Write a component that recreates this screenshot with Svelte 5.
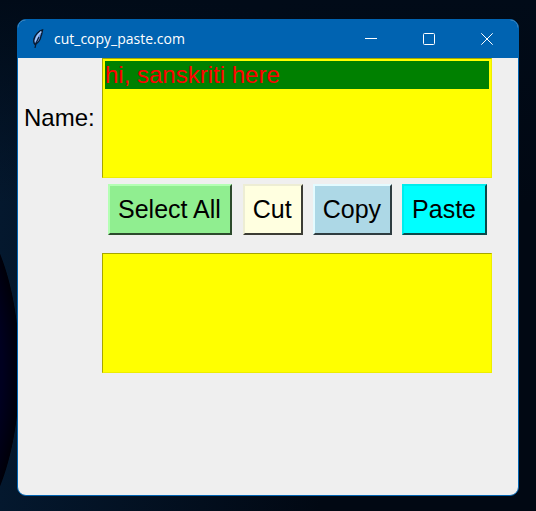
<script>
  let source = $state('hi, sanskriti here');
  let target = $state('');
  let clipboard = $state('');
  let selected = $state(true);

  function copy() {
    clipboard = source;
  }
  function cut() {
    clipboard = source;
    source = '';
    selected = false;
  }
  function paste() {
    target += clipboard;
  }
</script>

<div class="desktop">
  <main class="window">
    <header>
      <svg class="feather" width="16" height="22" viewBox="0 0 16 22" aria-hidden="true">
        <path d="M12.500 2C8.500 3 5 7 4 11c-.6 2.500 0 4.500 1 5.500 3-1.500 5.500-5 6-8.500l.6-1.500Z" fill="#5f8fdc" stroke="#0a1a30" stroke-width="1.400" />
        <path d="M11.300 3.500C8.500 6 6.200 9.500 5.300 13.500" fill="none" stroke="#a9c8f5" stroke-width="1.600" />
        <path d="M9 9C7.500 11.500 5.500 14.500 5 20" fill="none" stroke="#0a1a30" stroke-width="1.200" />
      </svg>
      <h1>cut_copy_paste.com</h1>
      <button class="control" aria-label="Minimize">
        <svg width="12" height="12" viewBox="0 0 12 12"><path d="M0 5.500h12" /></svg>
      </button>
      <button class="control" aria-label="Maximize">
        <svg width="12" height="12" viewBox="0 0 12 12"><rect x=".5" y=".5" width="11" height="11" rx="1" /></svg>
      </button>
      <button class="control" aria-label="Close">
        <svg width="12" height="12" viewBox="0 0 12 12"><path d="M.3.3l11.400 11.400M11.700.3L.3 11.700" /></svg>
      </button>
    </header>
    <div class="form">
      <label for="name">Name:</label>
      <textarea id="name" class:selected bind:value={source} spellcheck="false"></textarea>
      <div class="actions">
        <button class="action select" onclick={() => (selected = true)}>Select All</button>
        <button class="action cut" onclick={cut}>Cut</button>
        <button class="action copy" onclick={copy}>Copy</button>
        <button class="action paste" onclick={paste}>Paste</button>
      </div>
      <textarea class="result" aria-label="Pasted text" bind:value={target} spellcheck="false"></textarea>
    </div>
  </main>
</div>

<style>
  :global(body) {
    margin: 0;
    background: #010813;
  }
  .desktop {
    box-sizing: border-box;
    display: flex;
    min-height: 100vh;
    padding: 19px 17px 15px;
    background:
      radial-gradient(ellipse 72px 170px at -52px 370px, #00002a 0, #000020 75%, #000009 99%, transparent 100%),
      linear-gradient(180deg, #010b18 0, transparent 40%),
      linear-gradient(90deg, #04182e, #010813 60%);
  }
  .window {
    flex: 1;
    display: flex;
    flex-direction: column;
    overflow: hidden;
    border: 1px solid #0063b1;
    border-radius: 9px;
    background: #efefef;
    font-family: "Liberation Sans", Arial, sans-serif;
  }
  header {
    display: flex;
    align-items: center;
    height: 38px;
    padding: 0 2px 0 12px;
    background: #0063b1;
    color: #fff;
  }
  .feather {
    flex: none;
    margin-right: 8px;
  }
  h1 {
    flex: 1;
    margin: 0;
    font: 400 14px/20px "Open Sans", "Noto Sans", sans-serif;
  }
  .control {
    display: flex;
    align-items: center;
    justify-content: center;
    width: 58px;
    height: 38px;
    padding: 0;
    border: 0;
    background: none;
  }
  .control svg {
    fill: none;
    stroke: #fff;
    stroke-width: 1;
  }
  .form {
    display: grid;
    grid-template-columns: 84px 1fr;
    align-items: center;
    padding-right: 26px;
    font-size: 24px;
    line-height: 28px;
  }
  label {
    padding-left: 6px;
  }
  textarea {
    box-sizing: border-box;
    display: block;
    width: 100%;
    height: 120px;
    padding: 2px;
    border: 1px solid;
    border-color: #a6a600 #eeee00 #eeee00 #a6a600;
    border-radius: 0;
    outline: 0;
    resize: none;
    overflow: hidden;
    background: #ff0;
    color: #f00;
    font: inherit;
  }
  .selected {
    background: linear-gradient(#008000, #008000) content-box 0 0 / 100% 28px no-repeat, #ff0;
  }
  .actions,
  .result {
    grid-column: 2;
  }
  .actions {
    display: flex;
    gap: 10px;
    padding: 6px 5px 18px 6px;
  }
  .action {
    padding: 8px 9px 9px 8px;
    border: 2px solid;
    border-radius: 0;
    color: #000;
    font: 25px/30px "Liberation Sans", Arial, sans-serif;
  }
  .select {
    margin-right: auto;
    background: #90ee90;
    border-color: #b4ffb4 #2c4a2c #2c4a2c #b4ffb4;
  }
  .cut {
    background: #ffffe0;
    border-color: #ededd4 #3c3c34 #3c3c34 #ededd4;
  }
  .copy {
    background: #add8e6;
    border-color: #e4fbff #2f3c40 #2f3c40 #e4fbff;
  }
  .paste {
    background: #0ff;
    border-color: #00eded #0c4a4a #0c4a4a #00eded;
  }
</style>
